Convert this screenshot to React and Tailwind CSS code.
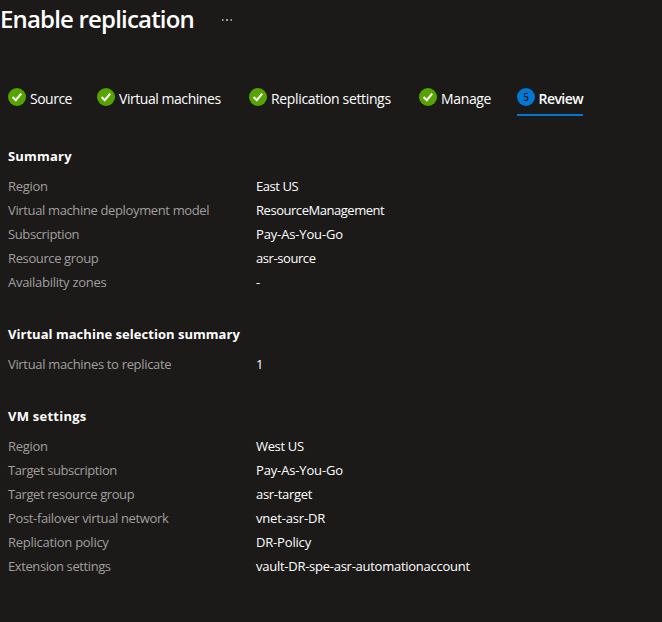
const groups = [
  {
    title: 'Summary',
    track: 'tracking-[0.2px]',
    rows: [
      ['Region', 'tracking-[-0.3px]', 'East US', 'tracking-[-0.45px]'],
      ['Virtual machine deployment model', 'tracking-[-0.36px]', 'ResourceManagement', 'tracking-[-0.46px]'],
      ['Subscription', 'tracking-[-0.38px]', 'Pay-As-You-Go', 'tracking-[-0.15px]'],
      ['Resource group', 'tracking-[-0.38px]', 'asr-source', 'tracking-[-0.42px]'],
      ['Availability zones', 'tracking-[-0.28px]', '-', ''],
    ],
  },
  {
    title: 'Virtual machine selection summary',
    track: 'tracking-[0.03px]',
    rows: [['Virtual machines to replicate', 'tracking-[-0.33px]', '1', '']],
  },
  {
    title: 'VM settings',
    track: 'tracking-[0.25px]',
    rows: [
      ['Region', 'tracking-[-0.3px]', 'West US', 'tracking-[-0.35px]'],
      ['Target subscription', 'tracking-[-0.42px]', 'Pay-As-You-Go', 'tracking-[-0.15px]'],
      ['Target resource group', 'tracking-[-0.42px]', 'asr-target', 'tracking-[-0.3px]'],
      ['Post-failover virtual network', 'tracking-[-0.35px]', 'vnet-asr-DR', 'tracking-[-0.18px]'],
      ['Replication policy', 'tracking-[-0.27px]', 'DR-Policy', 'tracking-[-0.18px]'],
      ['Extension settings', 'tracking-[-0.4px]', 'vault-DR-spe-asr-automationaccount', 'tracking-[-0.26px]'],
    ],
  },
];

const steps = [
  { label: 'Source', width: 'w-[89px]', track: 'tracking-[-0.5px]' },
  { label: 'Virtual machines', width: 'w-[152px]', track: 'tracking-[-0.45px]' },
  { label: 'Replication settings', width: 'w-[170px]', track: 'tracking-[-0.35px]' },
  { label: 'Manage', width: 'w-[98px]', track: 'tracking-[-0.35px]' },
];

function CheckIcon() {
  return (
    <svg className="mt-px size-[18px] shrink-0" viewBox="0 0 18 18" fill="none" aria-hidden="true">
      <circle cx="9" cy="9" r="9" fill="#57a300" />
      <path d="M4.6 8.9 7.8 12.2 13.2 5.6" stroke="#fff" strokeWidth="2.1" />
    </svg>
  );
}

export default function App() {
  return (
    <div className="h-[622px] overflow-hidden bg-[#1b1a19] font-['Open_Sans','Noto_Sans',sans-serif] text-[13px] text-white">
      <header className="flex h-10 items-center">
        <h1 className="w-[221px] pb-0.5 text-2xl leading-[38px] font-semibold tracking-[-0.82px] whitespace-nowrap">Enable replication</h1>
        <svg className="h-[2px] w-3" viewBox="0 0 12 2" fill="#a19f9d" aria-hidden="true">
          <rect x="1" width="1.5" height="2" />
          <rect x="5" width="2" height="2" />
          <rect x="9.5" width="1.5" height="2" />
        </svg>
      </header>

      <nav className="mt-[47px] flex h-[29px] pl-2 text-sm leading-6 whitespace-nowrap">
        {steps.map((s) => (
          <div key={s.label} className={`flex gap-1 ${s.width}`}>
            <CheckIcon />
            <span className={s.track}>{s.label}</span>
          </div>
        ))}
        <div className="flex w-[66px] gap-[3.5px] border-b-2 border-[#0078d4]">
          <span className="mt-px flex size-[18px] shrink-0 items-center justify-center rounded-full bg-[#0078d4] text-[10px] leading-none font-semibold text-[#1b1a19]">5</span>
          <span className="font-semibold tracking-[-0.55px]">Review</span>
        </div>
      </nav>

      <main className="flex flex-col gap-[30px] pt-[30px] pl-2">
        {groups.map((g) => (
          <section key={g.title}>
            <h2 className={`h-7 leading-5 font-bold ${g.track}`}>{g.title}</h2>
            {g.rows.map(([label, labelTrack, value, valueTrack]) => (
              <div key={label} className="flex h-6 leading-6">
                <span className={`w-[248px] text-[#a19f9d] ${labelTrack}`}>{label}</span>
                <span className={valueTrack}>{value}</span>
              </div>
            ))}
          </section>
        ))}
      </main>
    </div>
  );
}
